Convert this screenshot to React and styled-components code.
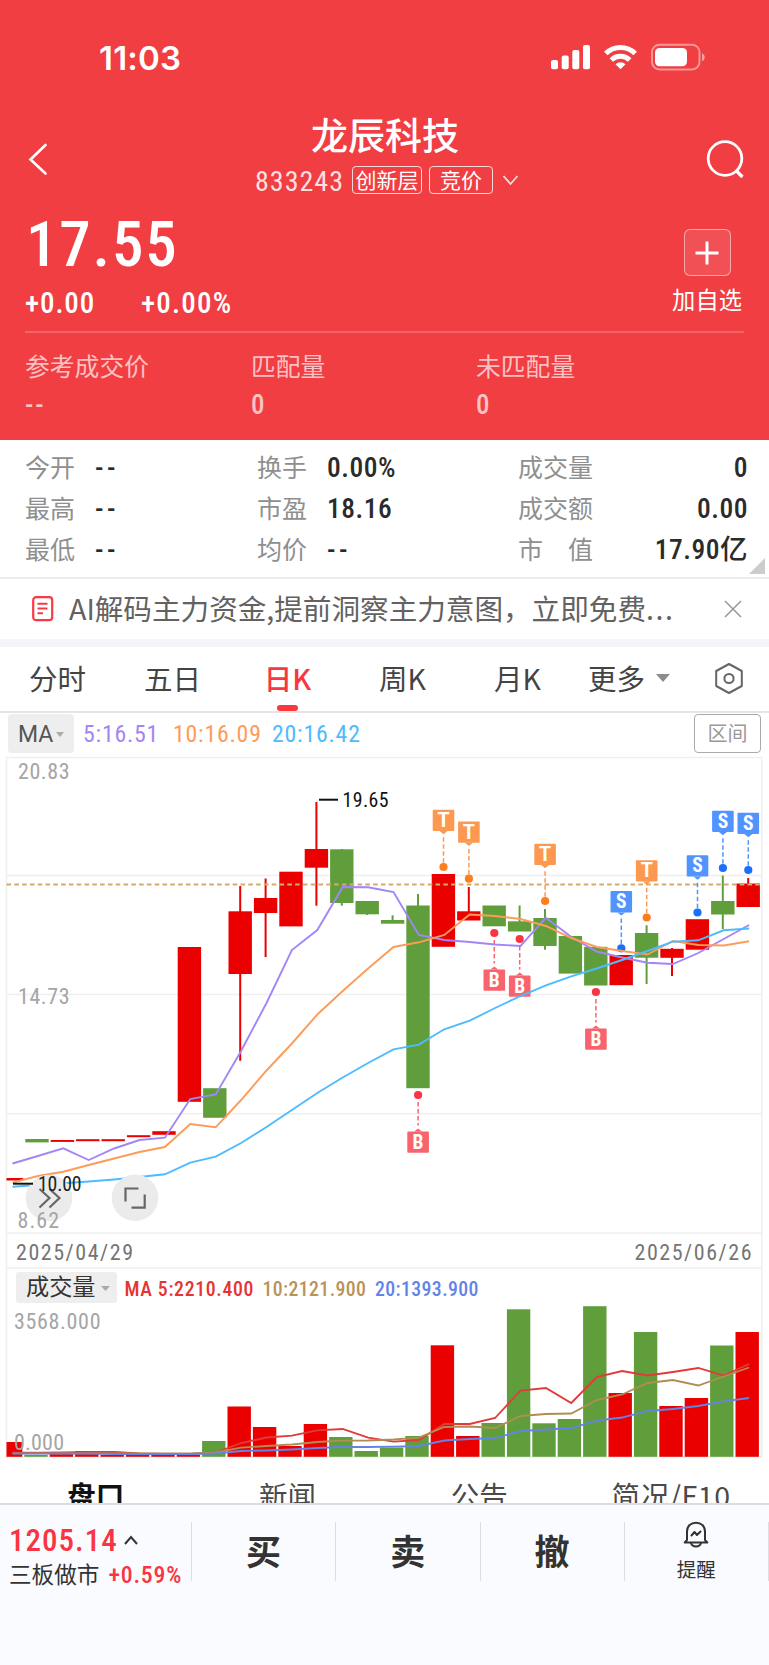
import React from 'react';
import styled, { createGlobalStyle } from 'styled-components';

const GlobalStyle = createGlobalStyle`
  * {
    box-sizing: border-box;
  }

  body {
    background: #fff;
    margin: 0;
  }
`;

const cjk = `'Noto Sans CJK SC', sans-serif`;
const din = `'Roboto Condensed', Roboto, 'Noto Sans CJK SC', sans-serif`;

const Page = styled.div`
  color: #333;
  display: flex;
  flex-direction: column;
  font-family: ${cjk};
  height: 1665px;
  overflow: hidden;
  width: 769px;
`;

const Num = styled.span`
  color: ${props => props.$color || 'inherit'};
  font-family: ${din};
  font-size: ${props => props.$size}px;
  font-weight: ${props => props.$weight || 400};
  letter-spacing: ${props => props.$spacing || 0}px;
  line-height: 1;
  white-space: nowrap;
`;

/* Header */

const Header = styled.header`
  background: #f03e42;
  color: #fff;
  flex: none;
  height: 440px;
`;

const StatusBar = styled.div`
  align-items: center;
  display: flex;
  height: 114px;
  justify-content: space-between;
  padding: 0 63px 0 99px;
`;

const Clock = styled.span`
  font-family: Inter, sans-serif;
  font-size: 33px;
  font-weight: 600;
  letter-spacing: 0.2px;
  line-height: 1;
  padding-top: 2px;
`;

const NavBar = styled.div`
  display: flex;
  height: 98px;
  justify-content: space-between;
  padding: 0 25px 0 27px;
`;

const NavSide = styled.div`
  padding-top: ${props => props.$top}px;
  width: 38px;
`;

const NavTitle = styled.div`
  align-items: center;
  display: flex;
  flex-direction: column;
`;

const StockName = styled.h1`
  font-size: 37px;
  font-weight: 500;
  line-height: 40px;
  margin: 0 1px 0 0;
`;

const StockMeta = styled.div`
  align-items: center;
  color: rgba(255, 255, 255, 0.85);
  display: flex;
  height: 28px;
  margin: 12px 0 0 4px;
`;

const StockCode = styled(Num)`
  margin-top: 3px;
`;

const Tag = styled.span`
  border: 1.5px solid rgba(255, 255, 255, 0.8);
  border-radius: 4px;
  color: #fff;
  font-size: 21px;
  height: 28px;
  line-height: 25px;
  margin-left: ${props => props.$gap}px;
  text-align: center;
  width: ${props => props.$width}px;
`;

const Quote = styled.div`
  display: flex;
  height: 119px;
  justify-content: space-between;
  padding: 0 27px 0 25px;
`;

const Prices = styled.div`
  display: flex;
  flex-direction: column;
`;

const Price = styled.div`
  height: 66px;
  padding: 1px 0 0 1px;
`;

const Changes = styled.div`
  display: flex;
  margin-top: 11px;
`;

const ChangeCell = styled.div`
  width: 116px;
`;

const AddWatch = styled.div`
  align-items: center;
  display: flex;
  flex-direction: column;
  font-size: 23.3px;
  line-height: 30px;
  padding-top: 17px;
`;

const AddButton = styled.button`
  align-items: center;
  background: rgba(255, 255, 255, 0.1);
  border: 1.5px solid rgba(255, 255, 255, 0.5);
  border-radius: 6px;
  display: flex;
  height: 47px;
  justify-content: center;
  margin-bottom: 8px;
  padding: 0;
  width: 47px;
`;

const Match = styled.div`
  border-top: 2px solid rgba(255, 255, 255, 0.2);
  color: rgba(255, 255, 255, 0.7);
  display: grid;
  grid-template-columns: 226px 225px 1fr;
  margin: 0 25px;
  padding-top: 17px;
`;

const MatchLabel = styled.div`
  font-size: 24.8px;
  line-height: 30px;
`;

const MatchValue = styled.div`
  line-height: 30px;
  margin-top: 12px;
`;

/* Stats */

const Stats = styled.section`
  border-bottom: 2px solid #ececec;
  display: grid;
  flex: none;
  grid-template-columns: 232px 261px 1fr;
  grid-template-rows: repeat(3, 41px);
  height: 139px;
  padding: 7px 21px 0 25px;
  position: relative;
`;

const Stat = styled.div`
  align-items: center;
  display: flex;
  justify-content: ${props => (props.$spread ? 'space-between' : 'flex-start')};
`;

const StatLabel = styled.span`
  color: #8f8f8f;
  font-size: 25px;
  line-height: 38px;
  margin-bottom: 4px;
  width: ${props => props.$width};
`;

const Corner = styled.i`
  border-bottom: 16px solid #ccc;
  border-left: 16px solid transparent;
  bottom: 3px;
  position: absolute;
  right: 4px;
`;

/* Banner */

const Banner = styled.section`
  align-items: center;
  border-bottom: 8px solid #f3f5fa;
  color: #626262;
  display: flex;
  flex: none;
  font-size: 28.6px;
  height: 68px;
  padding: 0 27px 0 32px;
`;

const BannerText = styled.span`
  flex: 1;
  line-height: 40px;
  margin: 0 0 2px 15px;
  white-space: nowrap;
`;

const Dots = styled.span`
  letter-spacing: 1.6px;
`;

/* Period tabs */

const Periods = styled.nav`
  border-bottom: 2px solid #e6e6e6;
  display: flex;
  flex: none;
  height: 66px;
`;

const Period = styled.div`
  align-items: center;
  color: ${props => (props.$active ? '#f93740' : '#444')};
  display: flex;
  flex-direction: column;
  font-size: 28.5px;
  font-weight: ${props => (props.$active ? 500 : 400)};
  height: 64px;
  justify-content: space-between;
  line-height: 62px;
  width: 115px;

  &::after {
    background: ${props => (props.$active ? '#f93740' : 'transparent')};
    border-radius: 3px;
    content: '';
    flex: none;
    height: 6px;
    margin-top: -4px;
    width: 21px;
  }
`;

const More = styled.div`
  align-items: center;
  color: #444;
  display: flex;
  font-size: 28.5px;
  gap: 11px;
  line-height: 62px;
  padding: 0 0 2px 13px;
  width: 139px;
`;

const Caret = styled.i`
  border: ${props => props.$size}px solid transparent;
  border-bottom: 0;
  border-top: ${props => props.$size * 1.25}px solid ${props => props.$color};
`;

/* Indicator bar */

const IndicatorBar = styled.div`
  align-items: center;
  display: flex;
  flex: none;
  height: 43px;
  padding: 0 8px 3px;
`;

const MaSelect = styled.div`
  align-items: center;
  background: #eee;
  border-radius: 4px;
  color: #555;
  display: flex;
  font-family: Roboto, sans-serif;
  font-size: 23px;
  gap: 3px;
  height: 39px;
  padding: 2px 0 0 10px;
  width: 66px;
`;

const MaValues = styled.div`
  display: grid;
  flex: 1;
  grid-template-columns: 90px 99px 1fr;
  padding: 4px 0 0 9px;
`;

const RangeButton = styled.div`
  border: 1.5px solid #aaa;
  border-radius: 4px;
  color: #999;
  font-size: 20px;
  height: 39px;
  line-height: 36px;
  text-align: center;
  width: 67px;
`;

const Charts = styled.svg`
  display: block;
  flex: none;
  height: 708px;
  width: 769px;
`;

/* Bottom */

const InfoTabs = styled.nav`
  display: grid;
  flex: none;
  grid-template-columns: repeat(4, 1fr);
  height: 39px;
  overflow: hidden;
  padding: 12px 2px 0 0;
`;

const InfoTab = styled.div`
  color: ${props => (props.$active ? '#111' : '#4a4a4a')};
  font-size: 28.5px;
  font-weight: ${props => (props.$active ? 700 : 400)};
  letter-spacing: ${props => props.$spacing || 0}px;
  line-height: 38px;
  text-align: center;
`;

const BottomBar = styled.footer`
  background: #fafbfe;
  border-top: 2px solid #dcdcde;
  display: flex;
  flex: 1;
  padding-top: 17px;
`;

const IndexBox = styled.div`
  border-right: 1.5px solid #dedee2;
  height: 59px;
  padding: 3px 0 0 9px;
  width: 192px;
`;

const IndexRow = styled.div`
  align-items: center;
  display: flex;
  gap: ${props => props.$gap}px;
  height: ${props => props.$height}px;
`;

const IndexName = styled.span`
  font-size: 22.6px;
  line-height: 30px;
  margin-bottom: 3px;
  white-space: nowrap;
`;

const Action = styled.div`
  align-items: center;
  border-right: 1.5px solid #dedee2;
  color: #333;
  display: flex;
  flex: 1;
  flex-direction: column;
  font-size: ${props => (props.$small ? 19.5 : 35)}px;
  font-weight: ${props => (props.$small ? 400 : 700)};
  height: 59px;
  line-height: ${props => (props.$small ? 25 : 55)}px;
`;

const BellBox = styled.div`
  height: 37px;
  margin-top: -1px;
`;

const RED = '#eb0000';
const GREEN = '#5f9e3b';

const stats = [
  ['今开', '--'],
  ['换手', '0.00%'],
  ['成交量', '0'],
  ['最高', '--'],
  ['市盈', '18.16'],
  ['成交额', '0.00'],
  ['最低', '--'],
  ['均价', '--'],
  ['市　值', '17.90亿'],
];

const statWidths = ['70px', '70px', 'auto'];

// [rising, body top, body bottom, wick top, wick bottom]
const candles = [
  [1, 1178, 1180.5],
  [0, 1139, 1142.4],
  [1, 1140, 1141.9],
  [1, 1139.2, 1141.2],
  [1, 1139.2, 1141.2],
  [1, 1135.2, 1137.2],
  [1, 1131.2, 1134.8],
  [1, 947, 1101.8],
  [0, 1088.2, 1117.8],
  [1, 911.3, 974, 886, 1060.8],
  [1, 898, 913, 878.5, 957],
  [1, 871.7, 926.4],
  [1, 849, 867.7, 802, 905.7],
  [0, 849.3, 903, 849, 905.7],
  [0, 901, 914.3, 901, 915],
  [0, 920, 923.7, 915.3, 923],
  [0, 905.5, 1088.2, 894, 906],
  [1, 874, 946.8],
  [1, 911.3, 920.5, 887, 912],
  [0, 905.5, 926.3],
  [0, 921.3, 931.5, 905.5, 922],
  [0, 918, 946, 909, 949.7],
  [0, 936, 973.6],
  [0, 946.8, 985.5],
  [1, 955, 985.2],
  [0, 933, 957.7, 925.3, 984],
  [1, 948.8, 957.8, 948, 976],
  [1, 919.2, 949.7],
  [0, 901, 914.5, 875.5, 929],
  [1, 883.5, 907, 878, 884],
];

const priceLines = [
  ['#a386f6', [1163.5, 1156, 1148.3, 1160, 1148.5, 1140, 1137.7, 1099, 1094.5, 1051, 1003, 950, 930, 887, 887.3, 892, 935, 940, 942, 944.5, 946, 917.7, 937, 951.5, 957.5, 962.7, 964, 953, 939, 925]],
  ['#fd9c59', [1182.7, 1176, 1171.7, 1165, 1158.5, 1152, 1147, 1124, 1127.3, 1100, 1070.5, 1043.5, 1014.5, 991, 968.5, 947, 942.3, 935, 914.5, 916, 919, 926, 938, 947, 951, 954.5, 941, 945, 945.5, 941.3]],
  ['#4dbbff', [1186.7, 1185, 1183.2, 1181.5, 1179.5, 1177, 1174.3, 1162.7, 1156.7, 1143, 1127, 1110, 1093, 1077.5, 1063, 1049.3, 1044.6, 1029.3, 1020.7, 1008, 996, 985.3, 976.3, 968.5, 960, 951, 941.7, 940.3, 930.3, 928.5]],
];

const volumes = [1442, 1455, 1454, 1451, 1455, 1455, 1455, 1455, 1441, 1406.5, 1427, 1446, 1424, 1437, 1451, 1447.5, 1436, 1345.3, 1436, 1423, 1309.3, 1423.3, 1419, 1306.2, 1393, 1332, 1406, 1398, 1345.5, 1332];

const volumeLines = [
  ['#e23a3a', [1452.7, 1452.7, 1452.3, 1452, 1452, 1453.3, 1454, 1454, 1452.5, 1443, 1437.5, 1435.7, 1430.3, 1429, 1437.7, 1441.7, 1440, 1424, 1424, 1418, 1390.5, 1388, 1403, 1377, 1371, 1375.5, 1372, 1368, 1375.5, 1364]],
  ['#b08d55', [1453.3, 1453.3, 1453.3, 1453.3, 1453.3, 1453.3, 1453.3, 1453.3, 1452.5, 1447.7, 1446, 1444.5, 1442, 1440.7, 1440.5, 1439.5, 1437.7, 1427, 1426.5, 1428, 1416, 1414, 1413.5, 1400, 1394.5, 1383, 1380, 1385.5, 1376.5, 1367.5]],
  ['#6483e6', [1453.7, 1453.7, 1453.7, 1453.7, 1454, 1454, 1454, 1454, 1453.5, 1451, 1450.5, 1449.5, 1448, 1447, 1447, 1446.7, 1446, 1440.5, 1439, 1438, 1431, 1429.5, 1428, 1420.7, 1417.5, 1411, 1409, 1406, 1401.3, 1398]],
];

const markerColors = {
  T: ['#fd9850', '#fc7e1f'],
  S: ['#5294ff', '#1a70fb'],
  B: ['#f9636e', '#f93544'],
};

// [kind, candle index, dot y]
const markers = [
  ['T', 17, 867],
  ['T', 18, 878.7],
  ['T', 21, 901],
  ['T', 25, 917.5],
  ['S', 24, 948.3],
  ['S', 27, 912.5],
  ['S', 28, 868],
  ['S', 29, 870],
  ['B', 16, 1095],
  ['B', 19, 933],
  ['B', 20, 939],
  ['B', 23, 992],
];

const slotX = i => 748.2 - 25.4 * (29 - i);
const linePoints = ys => ys.map((y, i) => `${slotX(i) + 0.9},${y}`).join(' ');

const ChartText = ({ x, y, size, width, color, weight = 400, children }) => (
  <text
    x={x}
    y={y}
    fill={color}
    fontFamily={din}
    fontSize={size}
    fontWeight={weight}
    textLength={width}
    lengthAdjust="spacing"
  >
    {children}
  </text>
);

const Candle = ({ index, data: [rising, top, bottom, high, low] }) => {
  const x = slotX(index);
  const color = rising ? RED : GREEN;
  return (
    <g fill={color}>
      {high && <rect x={x - 1} y={high} width="2" height={low - high} />}
      <rect x={x - 11.7} y={top} width="23.4" height={bottom - top} />
    </g>
  );
};

const Marker = ({ kind, index, dot }) => {
  const x = slotX(index) + 0.1;
  const below = kind === 'B';
  const [fill, dotFill] = markerColors[kind];
  const top = below ? dot + 36.4 : dot - 57.3;
  const tip = below ? top - 3 : top + 24.5;
  const edge = below ? top : top + 21.4;
  return (
    <g>
      <line
        x1={x}
        x2={x}
        y1={below ? dot + 7 : tip + 3}
        y2={below ? tip - 3 : dot - 4}
        stroke={fill}
        strokeWidth="1.5"
        strokeDasharray="4.5 2.5"
      />
      <rect x={x - 10.8} y={top} width="21.6" height="21.4" rx="1" fill={fill} />
      <path d={`M${x - 4} ${edge}L${x} ${tip}L${x + 4} ${edge}Z`} fill={fill} />
      <circle cx={x} cy={dot} r="4.1" fill={dotFill} />
      <text
        x={x}
        y={top + 17.2}
        fill="#fff"
        fontFamily={kind === 'T' ? 'Roboto, sans-serif' : din}
        fontSize="19.5"
        fontWeight="700"
        textAnchor="middle"
      >
        {kind}
      </text>
    </g>
  );
};

const MarketCharts = () => (
  <Charts viewBox="0 756 769 708">
    <defs>
      <clipPath id="plot">
        <rect x="6.5" y="757" width="755.5" height="700" />
      </clipPath>
    </defs>
    <g stroke="#efefef" strokeWidth="1.5">
      {[757.5, 875.5, 994.6, 1113.8, 1233, 1268].map(y => (
        <line key={y} x1="6" x2="762" y1={y} y2={y} />
      ))}
      <line x1="6.5" x2="6.5" y1="757" y2="1457" />
      <line x1="761.7" x2="761.7" y1="757" y2="1457" />
      <line x1="6" x2="762" y1="1457" y2="1457" />
    </g>

    <g clipPath="url(#plot)">
      {candles.map((data, i) => (
        <Candle key={i} index={i} data={data} />
      ))}
    </g>
    <line x1="6.5" x2="762" y1="884.5" y2="884.5" stroke="#d3ab6c" strokeWidth="2" strokeDasharray="4.6 3.2" />
    {markers.map(([kind, index, dot]) => (
      <Marker key={index} kind={kind} index={index} dot={dot} />
    ))}
    {priceLines.map(([color, ys]) => (
      <polyline key={color} points={linePoints(ys)} fill="none" stroke={color} strokeWidth="1.9" />
    ))}

    <line x1="319" x2="338" y1="799.7" y2="799.7" stroke="#111" strokeWidth="2" />
    <ChartText x={342.5} y={807} size={19.8} width={46} color="#111">19.65</ChartText>

    <circle cx="49" cy="1198" r="23.3" fill="#ebebeb" />
    <circle cx="135" cy="1197.7" r="23.3" fill="#ebebeb" />
    <g fill="none" stroke="#666" strokeWidth="2.2">
      <path d="M39.5 1189L49.5 1198L39.5 1207.5" />
      <path d="M49.5 1189L59.5 1198L49.5 1207.5" />
      <path d="M138.5 1188.5H125.5V1201.5" />
      <path d="M144.7 1194.5V1207.7H131.5" />
    </g>
    <line x1="13" x2="33" y1="1183.7" y2="1183.7" stroke="#111" strokeWidth="2" />
    <ChartText x={38} y={1191.3} size={19.8} width={43.5} color="#222">10.00</ChartText>

    <ChartText x={18} y={779} size={22} width={51.5} color="#a5a5a5">20.83</ChartText>
    <ChartText x={18} y={1003.7} size={22} width={51.5} color="#a5a5a5">14.73</ChartText>
    <ChartText x={17.5} y={1228} size={22} width={41.5} color="#a5a5a5">8.62</ChartText>

    <ChartText x={16} y={1259.7} size={22} width={117} color="#757575">2025/04/29</ChartText>
    <ChartText x={634.5} y={1259.7} size={22} width={117} color="#757575">2025/06/26</ChartText>

    <rect x="16" y="1272" width="101" height="31" rx="3" fill="#eee" />
    <ChartText x={26} y={1295.3} size={23.2} width={69.5} color="#333">成交量</ChartText>
    <path d="M101 1286H110L105.5 1291Z" fill="#aaa" />
    <ChartText x={124.5} y={1295.7} size={19.8} width={129} color="#e43434" weight={500}>MA 5:2210.400</ChartText>
    <ChartText x={262.5} y={1295.7} size={19.8} width={103.5} color="#b8935a" weight={500}>10:2121.900</ChartText>
    <ChartText x={375} y={1295.7} size={19.8} width={103.5} color="#6483e6" weight={500}>20:1393.900</ChartText>

    <g clipPath="url(#plot)">
      {volumes.map((top, i) => (
        <rect
          key={i}
          x={slotX(i) - 12.7}
          y={top}
          width="23.4"
          height={1456.8 - top}
          fill={candles[i][0] ? RED : GREEN}
        />
      ))}
    </g>
    {volumeLines.map(([color, ys]) => (
      <polyline key={color} points={linePoints(ys)} fill="none" stroke={color} strokeWidth="1.8" />
    ))}
    <ChartText x={14} y={1329} size={22} width={86.5} color="#a5a5a5">3568.000</ChartText>
    <ChartText x={14} y={1449.7} size={22} width={50} color="#a5a5a5">0.000</ChartText>
  </Charts>
);

const StatusIcons = () => (
  <svg width="156" height="28" viewBox="550 43 156 28">
    <g fill="#fff">
      <rect x="551" y="60" width="7" height="9.3" rx="2" />
      <rect x="561.7" y="55.5" width="7" height="13.8" rx="2" />
      <rect x="572.3" y="50" width="7" height="19.3" rx="2" />
      <rect x="583" y="45" width="7" height="24.3" rx="2" />
    </g>
    <g fill="none" stroke="#fff" strokeWidth="5">
      <path d="M605.8 53.5A21 21 0 0 1 635.2 53.5" />
      <path d="M611.3 60A13.4 13.4 0 0 1 629.7 60" />
    </g>
    <path d="M615.5 64.2A7.6 7.6 0 0 1 625.5 64.2L620.5 69.3Z" fill="#fff" />
    <rect x="652" y="44.7" width="47.5" height="24.8" rx="7.5" fill="none" stroke="#fff" strokeOpacity=".45" strokeWidth="2" />
    <rect x="655" y="48" width="32" height="18.2" rx="4.5" fill="#fff" />
    <path d="M702 53.2Q704.8 54.4 704.8 57.2T702 61.2Z" fill="#fff" fillOpacity=".5" />
  </svg>
);

const App = () => (
  <Page>
    <GlobalStyle />
    <Header>
      <StatusBar>
        <Clock>11:03</Clock>
        <StatusIcons />
      </StatusBar>
      <NavBar>
        <NavSide $top={29}>
          <svg width="22" height="34" viewBox="0 0 22 34" fill="none" stroke="#fff" strokeWidth="2.6" strokeLinecap="round">
            <path d="M18.5 2L3.5 16.5L18.5 30.5" />
          </svg>
        </NavSide>
        <NavTitle>
          <StockName>龙辰科技</StockName>
          <StockMeta>
            <StockCode $size={28} $spacing={1}>833243</StockCode>
            <Tag $width={70} $gap={8}>创新层</Tag>
            <Tag $width={64} $gap={7}>竞价</Tag>
            <svg width="27" height="14" viewBox="1 0 27 14" fill="none" stroke="#fff" strokeOpacity=".8" strokeWidth="1.8">
              <path d="M11.5 3L18.5 11L25.5 3" />
            </svg>
          </StockMeta>
        </NavTitle>
        <NavSide $top={26}>
          <svg width="38" height="40" viewBox="707 140 38 40" fill="none" stroke="#fff" strokeWidth="2.8">
            <circle cx="726" cy="158.5" r="16.8" />
            <path d="M737 170.5L743.5 177" strokeWidth="3.4" />
          </svg>
        </NavSide>
      </NavBar>
      <Quote>
        <Prices>
          <Price>
            <Num $size={63} $weight={500} $spacing={1.8}>17.55</Num>
          </Price>
          <Changes>
            <ChangeCell>
              <Num $size={29} $weight={500} $spacing={0.9}>+0.00</Num>
            </ChangeCell>
            <Num $size={29} $weight={500} $spacing={1.2}>+0.00%</Num>
          </Changes>
        </Prices>
        <AddWatch>
          <AddButton>
            <svg width="24" height="24" viewBox="0 0 24 24" stroke="#fff" strokeWidth="3">
              <path d="M0.5 12H23.5M12 0.5V23.5" />
            </svg>
          </AddButton>
          加自选
        </AddWatch>
      </Quote>
      <Match>
        {[['参考成交价', '--'], ['匹配量', '0'], ['未匹配量', '0']].map(([label, value]) => (
          <div key={label}>
            <MatchLabel>{label}</MatchLabel>
            <MatchValue>
              <Num $size={27} $weight={500} $spacing={2}>{value}</Num>
            </MatchValue>
          </div>
        ))}
      </Match>
    </Header>

    <Stats>
      {stats.map(([label, value], i) => (
        <Stat key={label} $spread={i % 3 === 2}>
          <StatLabel $width={statWidths[i % 3]}>{label}</StatLabel>
          <Num
            $size={27.5}
            $weight={500}
            $spacing={value === '--' ? 3.5 : 0.5}
            $color="#2b2b2b"
          >
            {value}
          </Num>
        </Stat>
      ))}
      <Corner />
    </Stats>

    <Banner>
      <svg width="22" height="26" viewBox="0 0 22 26" fill="none" stroke="#f93a45">
        <rect x="1.2" y="1.2" width="19" height="23" rx="3" strokeWidth="2.2" />
        <path d="M5.5 7.7H15.5M5.5 12.5H15.5M5.5 17.3H11" strokeWidth="2" />
      </svg>
      <BannerText>
        AI解码主力资金,提前洞察主力意图，立即免费<Dots>...</Dots>
      </BannerText>
      <svg width="18" height="18" viewBox="0 0 18 18" stroke="#999" strokeWidth="1.6">
        <path d="M1 1L17 17M17 1L1 17" />
      </svg>
    </Banner>

    <Periods>
      {['分时', '五日', '日K', '周K', '月K'].map(name => (
        <Period key={name} $active={name === '日K'}>{name}</Period>
      ))}
      <More>
        更多
        <Caret $size={7} $color="#8c8c8c" />
      </More>
      <svg width="30" height="62" viewBox="715 648 30 62" fill="none" stroke="#666" strokeWidth="2">
        <path d="M730 665L742.8 672V687L730 694L717.2 687V672Z" strokeLinejoin="round" />
        <circle cx="730" cy="679.5" r="4.6" />
      </svg>
    </Periods>

    <IndicatorBar>
      <MaSelect>
        MA
        <Caret $size={4.5} $color="#aaa" />
      </MaSelect>
      <MaValues>
        <Num $size={23.8} $spacing={0.8} $color="#a386f6">5:16.51</Num>
        <Num $size={23.8} $spacing={0.8} $color="#fd9c59">10:16.09</Num>
        <Num $size={23.8} $spacing={0.8} $color="#4dbbff">20:16.42</Num>
      </MaValues>
      <RangeButton>区间</RangeButton>
    </IndicatorBar>

    <MarketCharts />

    <InfoTabs>
      <InfoTab $active>盘口</InfoTab>
      <InfoTab>新闻</InfoTab>
      <InfoTab>公告</InfoTab>
      <InfoTab $spacing={0.6}>简况/F10</InfoTab>
    </InfoTabs>

    <BottomBar>
      <IndexBox>
        <IndexRow $gap={6} $height={30}>
          <Num $size={31} $weight={500} $spacing={1} $color="#f93544">1205.14</Num>
          <svg width="14" height="10" viewBox="0 0 14 10" fill="none" stroke="#333" strokeWidth="2">
            <path d="M1 9L7 2L13 9" />
          </svg>
        </IndexRow>
        <IndexRow $gap={9} $height={41}>
          <IndexName>三板做市</IndexName>
          <Num $size={23.8} $weight={500} $color="#f93544" $spacing={0.8}>+0.59%</Num>
        </IndexRow>
      </IndexBox>
      <Action>买</Action>
      <Action>卖</Action>
      <Action>撤</Action>
      <Action $small>
        <BellBox>
          <svg width="26" height="27" viewBox="0 0 26 27" fill="none" stroke="#333" strokeWidth="2" strokeLinejoin="round" strokeLinecap="round">
            <path d="M4 19V10.5C4 5 8 1.7 13 1.7S22 5 22 10.5V19L24.3 21.5H1.7Z" />
            <path d="M8 22C9 26.5 17 26.5 18 22" />
            <path d="M8.5 14.5L11.5 11L14 14L17.5 10.5" />
          </svg>
        </BellBox>
        提醒
      </Action>
    </BottomBar>
  </Page>
);

export default App;
